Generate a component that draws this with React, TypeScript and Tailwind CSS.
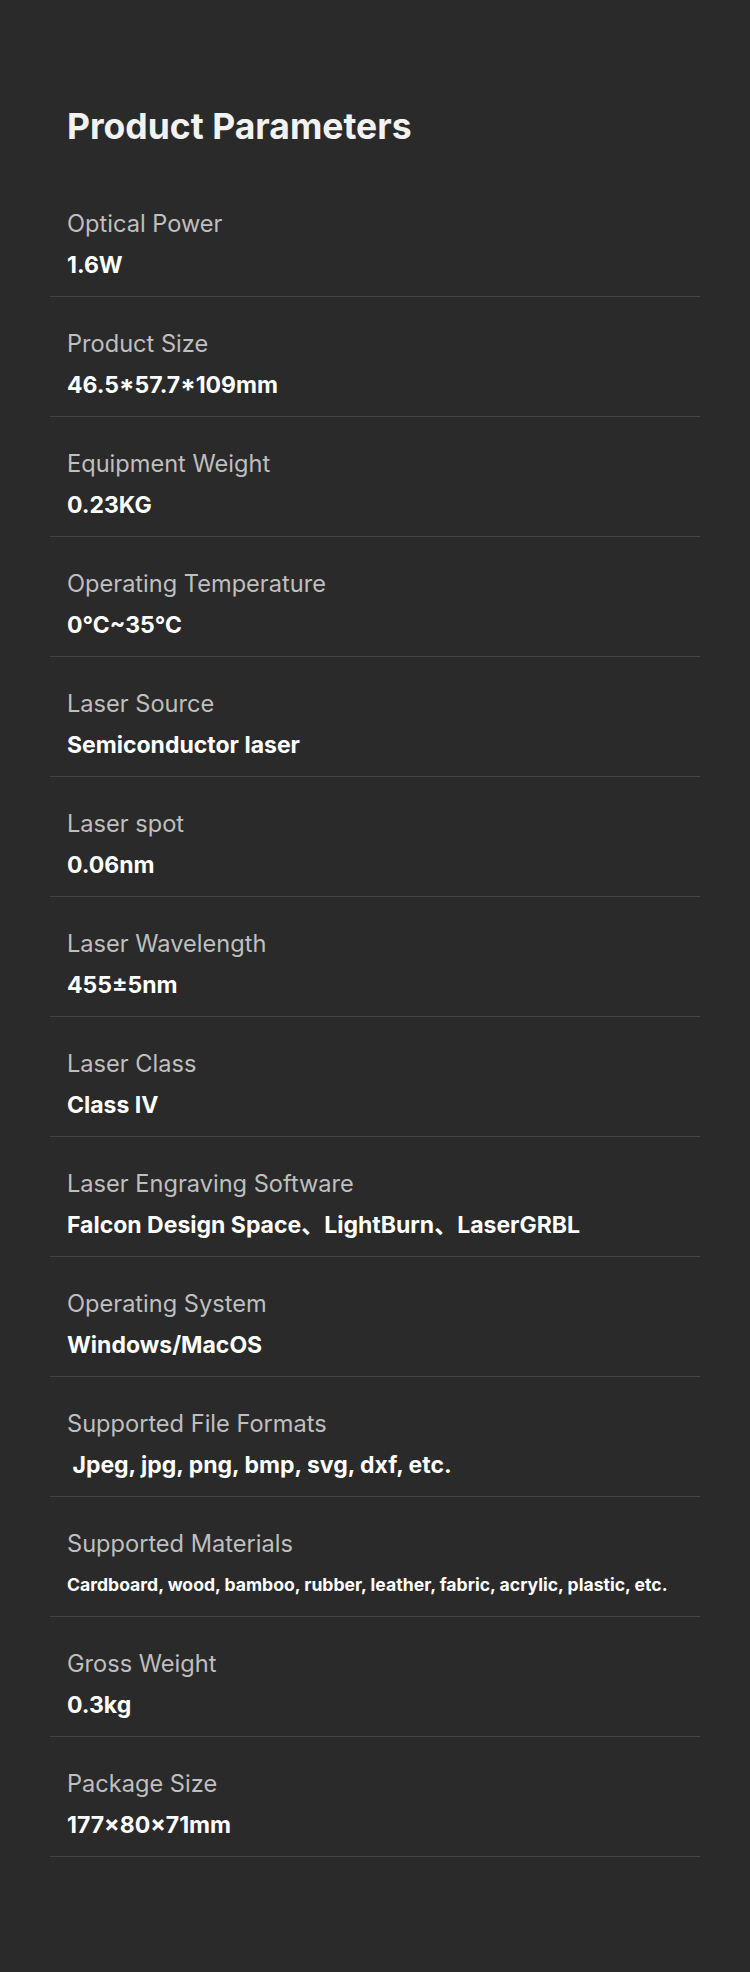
const params: { label: string; value: string; small?: boolean }[] = [
  { label: 'Optical Power', value: '1.6W' },
  { label: 'Product Size', value: '46.5*57.7*109mm' },
  { label: 'Equipment Weight', value: '0.23KG' },
  { label: 'Operating Temperature', value: '0℃~35℃' },
  { label: 'Laser Source', value: 'Semiconductor laser' },
  { label: 'Laser spot', value: '0.06nm' },
  { label: 'Laser Wavelength', value: '455±5nm' },
  { label: 'Laser Class', value: 'Class IV' },
  { label: 'Laser Engraving Software', value: 'Falcon Design Space、LightBurn、LaserGRBL' },
  { label: 'Operating System', value: 'Windows/MacOS' },
  { label: 'Supported File Formats', value: '\u00a0Jpeg, jpg, png, bmp, svg, dxf, etc.' },
  {
    label: 'Supported Materials',
    value: 'Cardboard, wood, bamboo, rubber, leather, fabric, acrylic, plastic, etc.',
    small: true,
  },
  { label: 'Gross Weight', value: '0.3kg' },
  { label: 'Package Size', value: '177×80×71mm' },
];

export default function App() {
  return (
    <div
      className="min-h-[1972px] w-[750px] bg-[#2a2a2a] px-[50px] pt-[105px] pb-[114px]"
      style={{ fontFamily: 'Inter, "Noto Sans", "Noto Sans CJK SC", sans-serif' }}
    >
      <h1 className="px-[17px] text-[35.5px] leading-[44px] font-bold text-[#f2f2f2]">
        Product Parameters
      </h1>

      <div className="mt-[28px]">
        {params.map((p) => (
          <div key={p.label} className="border-b border-[#444444] px-[17px] pt-[31px] pb-[16px]">
            <div className="text-[23.6px] leading-[32px] text-[#bfbfbf]">{p.label}</div>
            {p.small ? (
              <div className="mt-[10px] text-[17.6px] leading-[30px] font-bold text-white">{p.value}</div>
            ) : (
              <div className="mt-[10px] text-[23px] leading-[30px] font-bold text-white">{p.value}</div>
            )}
          </div>
        ))}
      </div>
    </div>
  );
}
